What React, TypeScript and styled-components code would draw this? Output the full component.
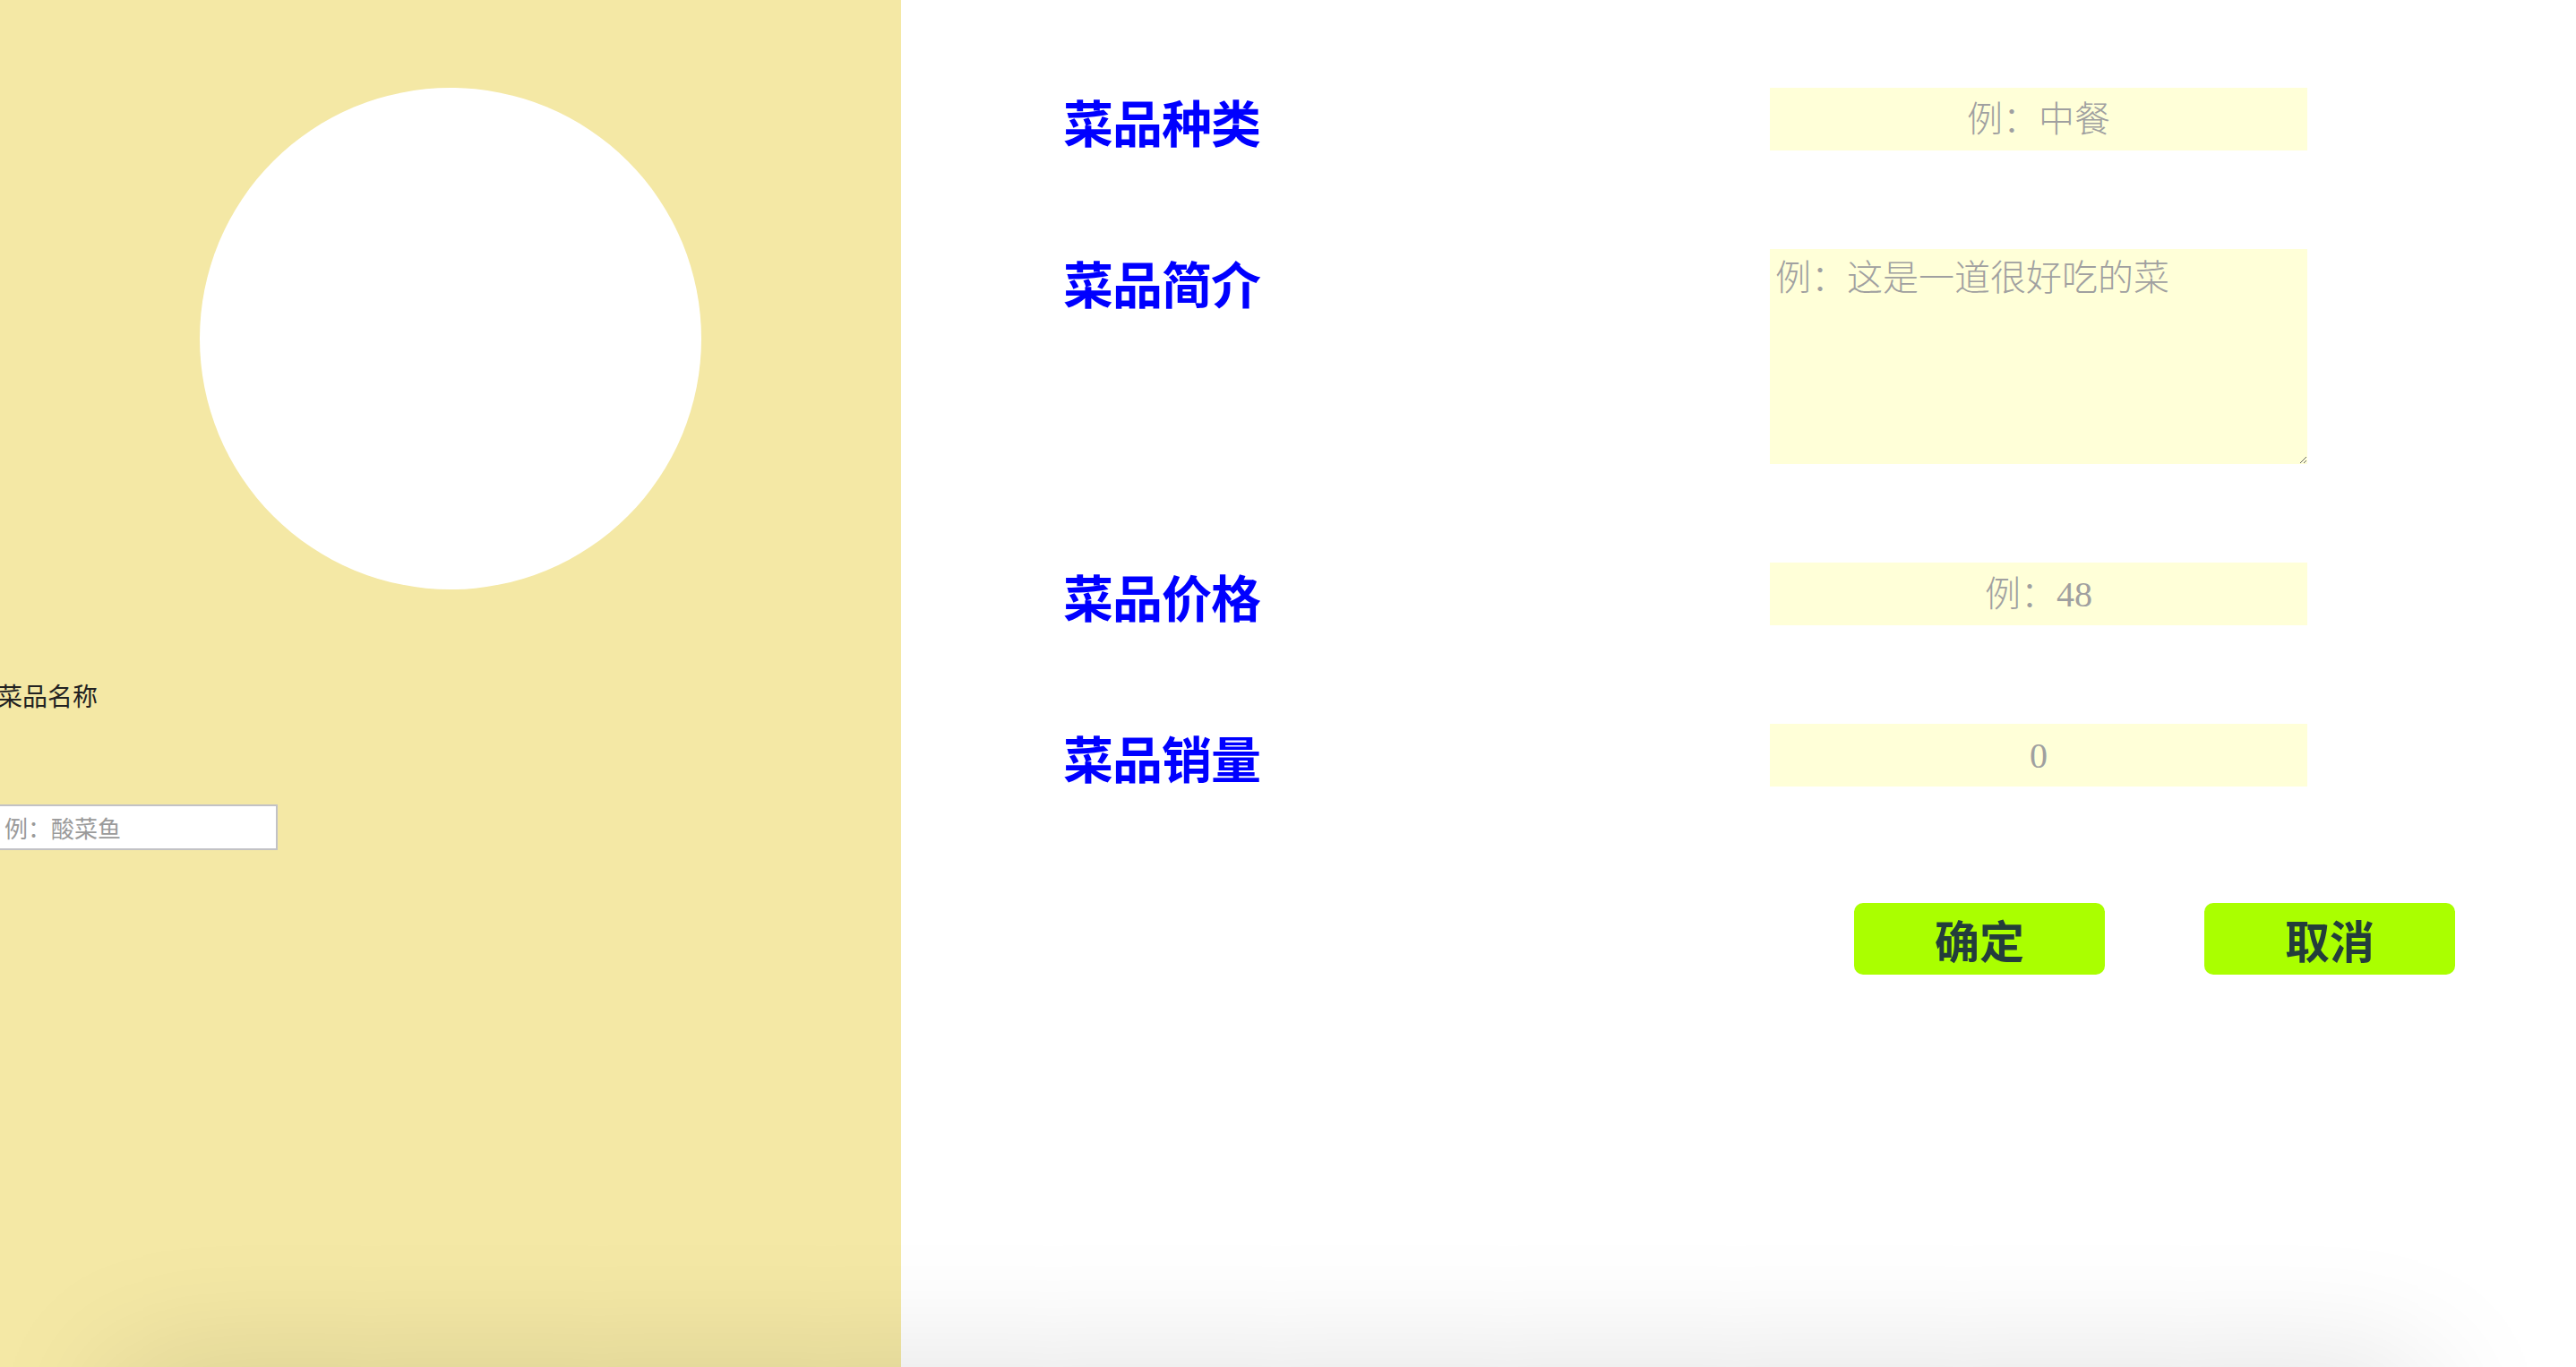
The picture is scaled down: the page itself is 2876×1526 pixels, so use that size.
import React from "react";
import styled, { createGlobalStyle } from "styled-components";

const GlobalStyle = createGlobalStyle`
  html, body {
    margin: 0;
    padding: 0;
    background: #ffffff;
    overflow: hidden;
  }
  * { box-sizing: border-box; }
`;

const Page = styled.div`
  display: flex;
  width: 100vw;
  height: 100vh;
  font-family: "Noto Sans CJK SC", "Noto Sans", sans-serif;
`;

const Sidebar = styled.aside`
  width: 1006px;
  flex: none;
  background: #f4e8a5;
  display: flex;
  flex-direction: column;
  align-items: flex-start;
`;

const Avatar = styled.div`
  width: 560px;
  height: 560px;
  border-radius: 50%;
  background: #ffffff;
  align-self: center;
  margin: 98px 0 0 0;
`;

const NameLabel = styled.div`
  margin: 98px 0 0 -3px;
  font-size: 28px;
  line-height: 40px;
  color: #222222;
`;

const NameInput = styled.input`
  margin: 102px 0 0 -3px;
  width: 313px;
  height: 51px;
  border: 2px solid #c2c2c6;
  background: #ffffff;
  padding: 0 6px;
  font-family: "Noto Sans CJK SC", "Noto Sans", sans-serif;
  font-size: 26px;
  outline: none;
  &::placeholder { color: #9a9a9a; }
`;

const Main = styled.main`
  flex: 1;
  display: flex;
  flex-direction: column;
  padding: 98px 0 0 181px;
`;

const Form = styled.div`
  display: grid;
  grid-template-columns: 789px 600px;
  row-gap: 110px;
  align-items: start;
`;

const Label = styled.div`
  font-size: 56px;
  line-height: 56px;
  padding-top: 9px;
  font-weight: 700;
  color: #0000ff;
  letter-spacing: -1px;
`;

const fieldBase = `
  width: 600px;
  border: none;
  outline: none;
  background: #ffffd8;
  font-family: "Liberation Serif", "Noto Sans CJK SC", serif;
  font-weight: 300;
  font-size: 40px;
  color: #333;
`;

const Field = styled.input`
  ${fieldBase}
  height: 70px;
  padding: 0 8px;
  text-align: center;
  &::placeholder { color: #a0a0a0; }
`;

const Area = styled.textarea`
  ${fieldBase}
  height: 240px;
  padding: 9px 6px;
  resize: both;
  line-height: 1.2;
  &::placeholder { color: #a0a0a0; }
`;

const Actions = styled.div`
  display: flex;
  gap: 111px;
  margin: 130px 0 0 883px;
`;

const Button = styled.button`
  width: 280px;
  height: 80px;
  border: none;
  border-radius: 10px;
  background: #aaff00;
  color: #233d3b;
  font-family: "Noto Sans CJK SC", "Noto Sans", sans-serif;
  font-weight: 700;
  font-size: 50px;
  line-height: 80px;
  padding: 0;
  cursor: pointer;
`;

const BottomShade = styled.div`
  position: fixed;
  left: 130px;
  right: 170px;
  bottom: -200px;
  height: 200px;
  box-shadow: 0 0 150px rgba(0, 0, 0, 0.13);
  pointer-events: none;
`;

const rows = [
  { label: "菜品种类", placeholder: "例：中餐", multi: false },
  { label: "菜品简介", placeholder: "例：这是一道很好吃的菜", multi: true },
  { label: "菜品价格", placeholder: "例：48", multi: false },
  { label: "菜品销量", placeholder: "0", multi: false },
];

export default function App() {
  return (
    <>
      <GlobalStyle />
      <Page>
        <Sidebar>
          <Avatar />
          <NameLabel>菜品名称</NameLabel>
          <NameInput placeholder="例：酸菜鱼" />
        </Sidebar>
        <Main>
          <Form>
            {rows.map((r) => (
              <React.Fragment key={r.label}>
                <Label>{r.label}</Label>
                {r.multi ? (
                  <Area placeholder={r.placeholder} />
                ) : (
                  <Field placeholder={r.placeholder} />
                )}
              </React.Fragment>
            ))}
          </Form>
          <Actions>
            <Button>确定</Button>
            <Button>取消</Button>
          </Actions>
        </Main>
      </Page>
      <BottomShade />
    </>
  );
}
